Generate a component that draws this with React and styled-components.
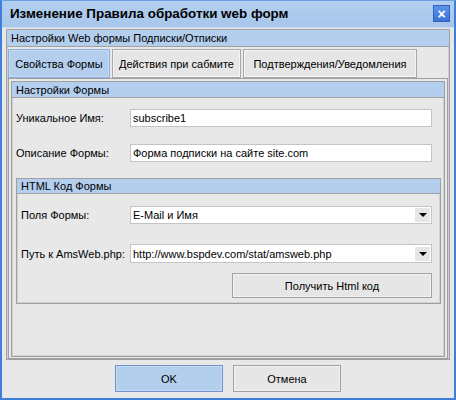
import React from "react";
import styled, { createGlobalStyle } from "styled-components";

const Global = createGlobalStyle`
  html, body { margin: 0; padding: 0; background: #ffffff; }
  body { font-family: "Liberation Sans", Arial, sans-serif; font-size: 11px; color: #000; }
  * { box-sizing: border-box; }
`;

const Window = styled.div`
  width: 456px;
  height: 400px;
  background: #e8e8e8;
  border: 2px solid #3f7fd9;
  border-top: 1px solid #6d9fe0;
  display: flex;
  flex-direction: column;
`;

const TitleBar = styled.div`
  height: 27px;
  flex: none;
  background: linear-gradient(#b3cff0, #a7c6ea);
  display: flex;
  align-items: center;
  justify-content: space-between;
  padding: 0 4px 1px 8px;
  border-bottom: 1px solid #c6d9ef;
`;

const Title = styled.div`
  font-weight: bold;
  font-size: 13.4px;
  color: #000;
`;

const CloseBtn = styled.div`
  width: 17px;
  height: 17px;
  background: linear-gradient(#5b95ea, #3c74d6);
  border: 1px solid #2f62c0;
  display: flex;
  align-items: center;
  justify-content: center;
  color: #fff;
  font-weight: bold;
  font-size: 14px;
  line-height: 1;
`;

const Body = styled.div`
  flex: 1;
  display: flex;
  flex-direction: column;
  padding: 1px 4px 0 4px;
`;

const Panel = styled.div`
  border: 1px solid #a0a0a0;
  box-shadow: inset 0 0 0 1px #d0d0d0;
  display: flex;
  flex-direction: column;
  flex: ${(p) => (p.$grow ? 1 : "none")};
  margin: ${(p) => p.$margin || "0"};
`;

const PanelHeader = styled.div`
  height: ${(p) => p.$h || 16}px;
  background: #b4cfee;
  border-bottom: 1px solid #a0a0a0;
  display: flex;
  align-items: center;
  padding-left: 4px;
  flex: none;
`;

const Tabs = styled.div`
  display: flex;
  gap: 2px;
  padding: 2px 1px 0 1px;
  height: 31px;
  flex: none;
`;

const Tab = styled.div`
  height: 29px;
  width: ${(p) => p.$w}px;
  display: flex;
  align-items: center;
  justify-content: center;
  background: ${(p) => (p.$active ? "#b4cfee" : "#e6e6e6")};
  border: 1px solid ${(p) => (p.$active ? "#8eaedb" : "#a8a8a8")};
  box-shadow: inset 0 0 0 1px ${(p) => (p.$active ? "#c4daf3" : "#f4f4f4")};
`;

const TabBody = styled.div`
  flex: 1;
  border: 1px solid #a0a0a0;
  margin: 0 1px 0 1px;
  display: flex;
  flex-direction: column;
  padding: 2px 2px 1px 2px;
`;

const FormGrid = styled.div`
  display: grid;
  grid-template-columns: ${(p) => p.$label}px 302px;
  align-items: center;
  row-gap: ${(p) => p.$gap}px;
  padding: ${(p) => p.$pad};
`;

const Label = styled.div`
  white-space: nowrap;
`;

const Input = styled.div`
  height: ${(p) => p.$h || 18}px;
  background: #fff;
  border: 1px solid #c4c4c4;
  display: flex;
  align-items: center;
  padding-left: 2px;
`;

const Select = styled(Input)`
  justify-content: space-between;
  padding-right: 1px;
`;

const Arrow = styled.div`
  width: 15px;
  height: 14px;
  background: #e6e6e6;
  display: flex;
  align-items: center;
  justify-content: center;
  &::after {
    content: "";
    border-left: 4px solid transparent;
    border-right: 4px solid transparent;
    border-top: 4px solid #000;
  }
`;

const ActionButton = styled.div`
  grid-column: 2;
  height: 25px;
  background: #e6e6e6;
  border: 1px solid #a0a0a0;
  box-shadow: inset 0 0 0 1px #f2f2f2;
  margin-left: 102px;
  display: flex;
  align-items: center;
  justify-content: center;
`;

const Spacer = styled.div`
  grid-column: 1 / 3;
  height: ${(p) => p.$h}px;
`;

const Footer = styled.div`
  height: 38px;
  flex: none;
  display: flex;
  justify-content: center;
  gap: 10px;
  padding-top: 5px;
`;

const DialogButton = styled.div`
  width: 108px;
  height: 27px;
  display: flex;
  align-items: center;
  justify-content: center;
  background: ${(p) => (p.$primary ? "#b4cfee" : "#e6e6e6")};
  border: 1px solid ${(p) => (p.$primary ? "#6f93c9" : "#a0a0a0")};
  box-shadow: inset 0 0 0 1px ${(p) => (p.$primary ? "#c7dbf3" : "#f2f2f2")};
`;

export default function App() {
  return (
    <>
      <Global />
      <Window>
        <TitleBar>
          <Title>Изменение Правила обработки web форм</Title>
          <CloseBtn>×</CloseBtn>
        </TitleBar>
        <Body>
          <Panel $grow>
            <PanelHeader $h={17}>Настройки Web формы Подписки/Отписки</PanelHeader>
            <Tabs>
              <Tab $w={102} $active>Свойства Формы</Tab>
              <Tab $w={129}>Действия при сабмите</Tab>
              <Tab $w={174}>Подтверждения/Уведомления</Tab>
            </Tabs>
            <TabBody>
              <Panel $grow>
                <PanelHeader>Настройки Формы</PanelHeader>
                <FormGrid $label={114} $gap={17} $pad="11px 0 0 4px">
                  <Label>Уникальное Имя:</Label>
                  <Input>subscribe1</Input>
                  <Label>Описание Формы:</Label>
                  <Input>Форма подписки на сайте site.com</Input>
                </FormGrid>
                <Panel $margin="16px 3px 0 4px">
                  <PanelHeader $h={15}>HTML Код Формы</PanelHeader>
                  <FormGrid $label={109} $gap={0} $pad="12px 0 5px 4px">
                    <Label>Поля Формы:</Label>
                    <Select>
                      E-Mail и Имя
                      <Arrow />
                    </Select>
                    <Spacer $h={20} />
                    <Label>Путь к AmsWeb.php:</Label>
                    <Select $h={19}>
                      http://www.bspdev.com/stat/amsweb.php
                      <Arrow />
                    </Select>
                    <Spacer $h={10} />
                    <ActionButton>Получить Html код</ActionButton>
                  </FormGrid>
                </Panel>
              </Panel>
            </TabBody>
          </Panel>
          <Footer>
            <DialogButton $primary>OK</DialogButton>
            <DialogButton>Отмена</DialogButton>
          </Footer>
        </Body>
      </Window>
    </>
  );
}
